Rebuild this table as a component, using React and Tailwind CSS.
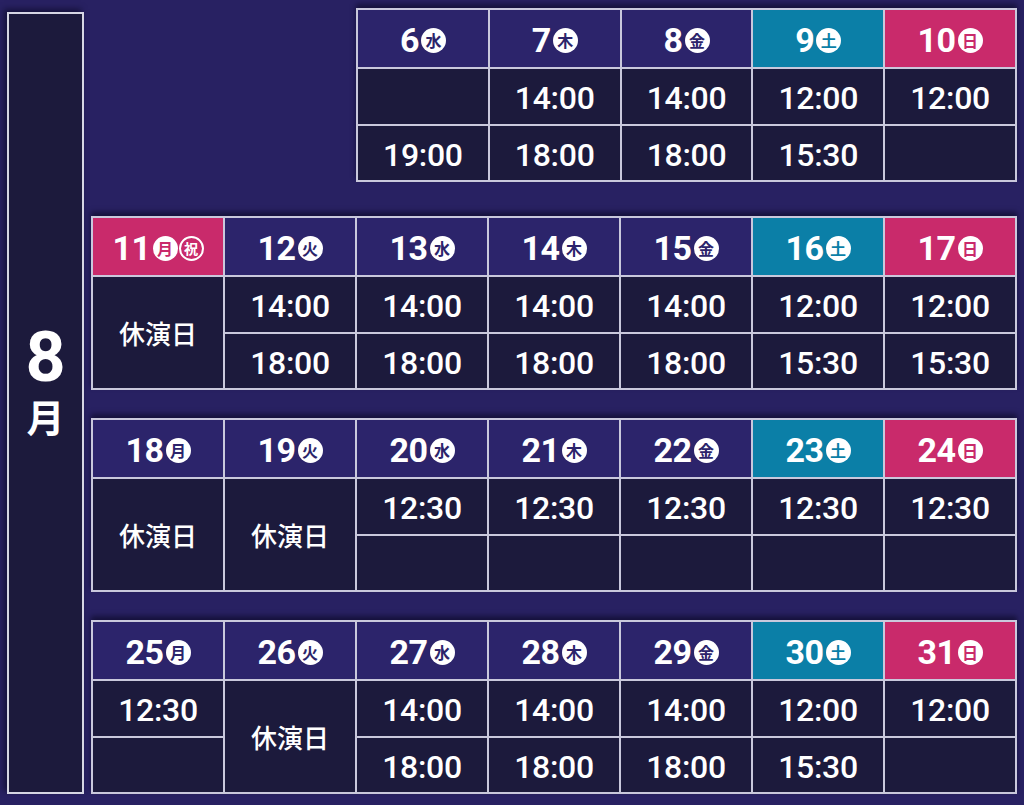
import React from "react";

const BG = {
  normal: "bg-[#2c246b]",
  sat: "bg-[#0b7fa7]",
  sun: "bg-[#c92a6b]",
};
const FG = {
  normal: "text-[#2c246b]",
  sat: "text-[#0b7fa7]",
  sun: "text-[#c92a6b]",
};

const weeks = [
  {
    cols: 5,
    days: [
      { n: "6", wd: "水", t: "normal", times: ["", "19:00"] },
      { n: "7", wd: "木", t: "normal", times: ["14:00", "18:00"] },
      { n: "8", wd: "金", t: "normal", times: ["14:00", "18:00"] },
      { n: "9", wd: "土", t: "sat", times: ["12:00", "15:30"] },
      { n: "10", wd: "日", t: "sun", times: ["12:00", ""] },
    ],
  },
  {
    cols: 7,
    days: [
      { n: "11", wd: "月", t: "sun", hol: true, off: true },
      { n: "12", wd: "火", t: "normal", times: ["14:00", "18:00"] },
      { n: "13", wd: "水", t: "normal", times: ["14:00", "18:00"] },
      { n: "14", wd: "木", t: "normal", times: ["14:00", "18:00"] },
      { n: "15", wd: "金", t: "normal", times: ["14:00", "18:00"] },
      { n: "16", wd: "土", t: "sat", times: ["12:00", "15:30"] },
      { n: "17", wd: "日", t: "sun", times: ["12:00", "15:30"] },
    ],
  },
  {
    cols: 7,
    days: [
      { n: "18", wd: "月", t: "normal", off: true },
      { n: "19", wd: "火", t: "normal", off: true },
      { n: "20", wd: "水", t: "normal", times: ["12:30", ""] },
      { n: "21", wd: "木", t: "normal", times: ["12:30", ""] },
      { n: "22", wd: "金", t: "normal", times: ["12:30", ""] },
      { n: "23", wd: "土", t: "sat", times: ["12:30", ""] },
      { n: "24", wd: "日", t: "sun", times: ["12:30", ""] },
    ],
  },
  {
    cols: 7,
    days: [
      { n: "25", wd: "月", t: "normal", times: ["12:30", ""] },
      { n: "26", wd: "火", t: "normal", off: true },
      { n: "27", wd: "水", t: "normal", times: ["14:00", "18:00"] },
      { n: "28", wd: "木", t: "normal", times: ["14:00", "18:00"] },
      { n: "29", wd: "金", t: "normal", times: ["14:00", "18:00"] },
      { n: "30", wd: "土", t: "sat", times: ["12:00", "15:30"] },
      { n: "31", wd: "日", t: "sun", times: ["12:00", ""] },
    ],
  },
];

const jp = "font-['Noto_Sans_CJK_JP',sans-serif]";
const num = "font-['Roboto',sans-serif]";

function Circle({ ch, t, outline }) {
  if (outline) {
    return (
      <span
        className={`${jp} ml-[1px] flex h-[25px] w-[25px] items-center justify-center rounded-full border-[2px] border-white text-[14px] font-bold leading-none text-white`}
      >
        {ch}
      </span>
    );
  }
  return (
    <span
      className={`${jp} ml-[2px] flex h-[25px] w-[25px] items-center justify-center rounded-full bg-white text-[16px] font-bold leading-none ${FG[t]}`}
    >
      {ch}
    </span>
  );
}

function Header({ d }) {
  return (
    <div className={`${BG[d.t]} flex items-center justify-center pt-[3px]`}>
      <span className={`${num} text-[34px] font-bold leading-none tracking-[-0.5px] text-white`}>
        {d.n}
      </span>
      <Circle ch={d.wd} t={d.t} />
      {d.hol && <Circle ch="祝" t={d.t} outline />}
    </div>
  );
}

function Time({ v }) {
  return (
    <div className="flex items-center justify-center bg-[#1c1a3c] pt-[3px]">
      <span className={`${num} text-[32px] font-medium leading-none tracking-[-0.3px] text-white`}>
        {v}
      </span>
    </div>
  );
}

function Week({ w, className }) {
  const cols = w.cols === 5 ? "grid-cols-5 w-[661px] self-end" : "grid-cols-7 w-[926px]";
  return (
    <div
      className={`grid ${cols} grid-flow-col grid-rows-[57px_55px_54px] gap-[2px] bg-[#c9c8dc] p-[2px] shadow-[0_-4px_5px_rgba(8,6,30,0.55)] ${className || ""}`}
    >
      {w.days.map((d) => (
        <React.Fragment key={d.n}>
          <Header d={d} />
          {d.off ? (
            <div className="row-span-2 flex items-center justify-center bg-[#1c1a3c]">
              <span className={`${jp} text-[26px] font-medium leading-none text-white`}>休演日</span>
            </div>
          ) : (
            <>
              <Time v={d.times[0]} />
              <Time v={d.times[1]} />
            </>
          )}
        </React.Fragment>
      ))}
    </div>
  );
}

export default function App() {
  return (
    <div className="flex h-[805px] w-[1024px] overflow-hidden bg-[#282162]">
      <div className="ml-[7px] mt-[12px] flex h-[782px] w-[77px] flex-col items-center justify-center border-[2px] border-[#d6d6e4] bg-[#1c1a3c] shadow-[-3px_-3px_6px_rgba(8,6,30,0.6)]">
        <span className={`${num} mt-[-40px] block text-[70px] font-bold leading-[52px] text-white`}>8</span>
        <span className={`${jp} mt-[14px] block text-[38px] font-bold leading-[38px] text-white`}>月</span>
      </div>
      <div className="ml-[7px] flex w-[926px] flex-col pt-[8px]">
        <Week w={weeks[0]} />
        <Week w={weeks[1]} className="mt-[34px]" />
        <Week w={weeks[2]} className="mt-[28px]" />
        <Week w={weeks[3]} className="mt-[28px]" />
      </div>
    </div>
  );
}
